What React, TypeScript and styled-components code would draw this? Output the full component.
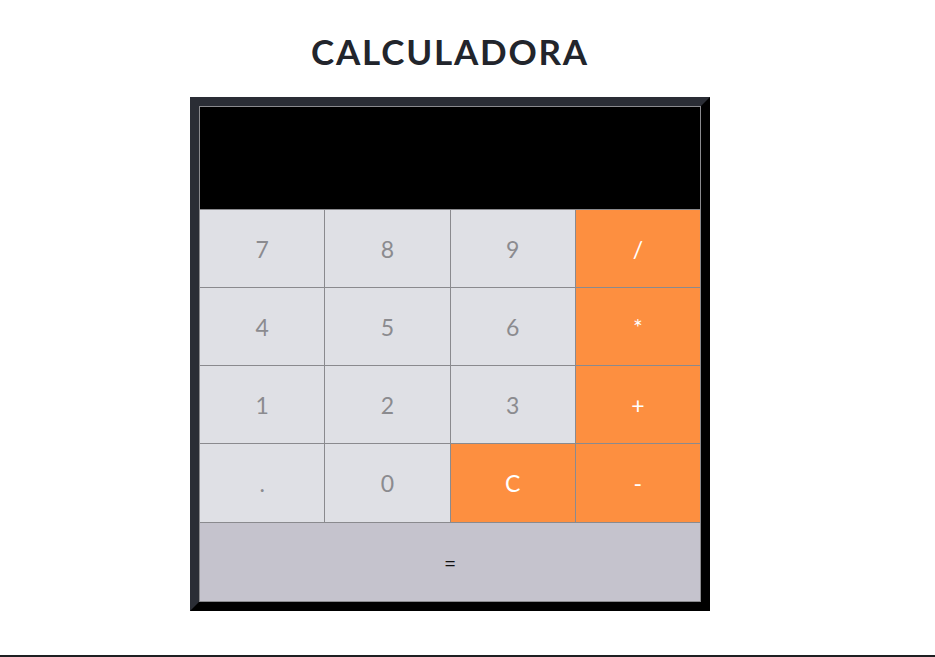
import styled, { createGlobalStyle } from "styled-components";

const GlobalStyle = createGlobalStyle`
  html, body {
    margin: 0;
    padding: 0;
    background: #ffffff;
    font-family: "Lato", "Open Sans", sans-serif;
  }
`;

const Page = styled.div`
  width: 900px;
  min-height: 657px;
  display: flex;
  flex-direction: column;
  align-items: center;
`;

const Title = styled.h1`
  margin: 29px 0 23px;
  font-size: 35px;
  font-weight: 700;
  letter-spacing: 1.8px;
  line-height: 45px;
  color: #22252c;
`;

const Frame = styled.div`
  width: 520px;
  box-sizing: border-box;
  border: 9px solid;
  border-color: #2a2d35 #000000 #000000 #2a2d35;
`;

const Keys = styled.div`
  display: grid;
  grid-template-columns: repeat(4, 1fr);
  grid-template-rows: 102px 77px 77px 77px 78px 78px;
  gap: 1px;
  padding: 1px;
  background: #8a8a8e;
`;

const Screen = styled.div`
  grid-column: 1 / -1;
  background: #000000;
`;

const Key = styled.button<{ $kind?: "digit" | "op" | "equals" }>`
  border: none;
  margin: 0;
  padding: 0;
  font-family: "Lato", "Open Sans", sans-serif;
  font-size: ${(p) => (p.$kind === "equals" ? "21px" : "23px")};
  background: ${(p) =>
    p.$kind === "op" ? "#fd8f40" : p.$kind === "equals" ? "#c5c3cd" : "#dfe0e5"};
  color: ${(p) =>
    p.$kind === "op" ? "#ffffff" : p.$kind === "equals" ? "#111111" : "#8b8b8f"};
  grid-column: ${(p) => (p.$kind === "equals" ? "1 / -1" : "auto")};
  cursor: pointer;
`;

const Footer = styled.div`
  margin-top: auto;
  align-self: flex-start;
  width: 935px;
  height: 2px;
  background: #1e1f22;
`;

const rows: { label: string; op?: boolean }[][] = [
  [{ label: "7" }, { label: "8" }, { label: "9" }, { label: "/", op: true }],
  [{ label: "4" }, { label: "5" }, { label: "6" }, { label: "*", op: true }],
  [{ label: "1" }, { label: "2" }, { label: "3" }, { label: "+", op: true }],
  [{ label: "." }, { label: "0" }, { label: "C", op: true }, { label: "-", op: true }],
];

export default function App() {
  return (
    <>
      <GlobalStyle />
      <Page>
        <Title>CALCULADORA</Title>
        <Frame>
          <Keys>
            <Screen />
            {rows.flat().map((k) => (
              <Key key={k.label} $kind={k.op ? "op" : "digit"}>
                {k.label}
              </Key>
            ))}
            <Key $kind="equals">=</Key>
          </Keys>
        </Frame>
        <Footer />
      </Page>
    </>
  );
}
